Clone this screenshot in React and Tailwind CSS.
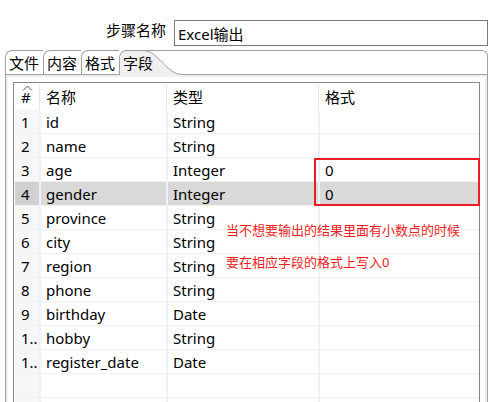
const fields = [
  ["1", "id", "String", ""],
  ["2", "name", "String", ""],
  ["3", "age", "Integer", "0"],
  ["4", "gender", "Integer", "0"],
  ["5", "province", "String", ""],
  ["6", "city", "String", ""],
  ["7", "region", "String", ""],
  ["8", "phone", "String", ""],
  ["9", "birthday", "Date", ""],
  ["1..", "hobby", "String", ""],
  ["1..", "register_date", "Date", ""],
  ["", "", "", ""],
  ["", "", "", ""],
];

function Tabs() {
  return (
    <div role="tablist" className="flex h-[25px]">
      {["文件", "内容", "格式"].map((name) => (
        <button
          key={name}
          type="button"
          role="tab"
          aria-selected="false"
          className="w-[38px] rounded-tl-[7px] border-t border-b border-l border-[#a0a0a0] pl-[3px] text-left leading-[25px] whitespace-nowrap"
        >
          {name}
        </button>
      ))}
      <button
        type="button"
        role="tab"
        aria-selected="true"
        className="relative w-[64px] pl-1 text-left leading-[27px] whitespace-nowrap"
      >
        <svg className="absolute inset-0" width="64" height="25" viewBox="0 0 64 25" fill="none" aria-hidden="true">
          <path d="M.5 25V6.5Q1.500 1.500 6 .5H24C40 .5 46 24.500 64 24.500V25Z" fill="#f0f0f0" />
          <path d="M.5 25V6.500Q1.500 1.500 6 .5H24C40 .5 46 24.500 64 24.500" stroke="#a0a0a0" />
          <path d="M6 .5H64" stroke="#a0a0a0" />
        </svg>
        <span className="relative">字段</span>
      </button>
      <div className="flex-1 rounded-tr-[6px] border-t border-r border-b border-[#a0a0a0]" />
    </div>
  );
}

function FieldTable() {
  return (
    <table className="w-full table-fixed border-separate border-spacing-0 text-left">
      <colgroup>
        <col className="w-[26px]" />
        <col className="w-[127px]" />
        <col className="w-[152px]" />
        <col />
      </colgroup>
      <thead>
        <tr className="h-[26px]">
          <th className="p-0 font-normal">
            <div className="relative mr-px h-[26px] border-r border-[#e5e5e5] pl-[6px] leading-[26px]">
              <svg className="absolute top-px left-[7px]" width="11" height="6" viewBox="0 0 11 6" fill="none" aria-hidden="true">
                <path d="M1 5.500L5.500 1L10 5.500" stroke="#555" />
              </svg>
              #
            </div>
          </th>
          {["名称", "类型"].map((name) => (
            <th key={name} className="p-0 font-normal">
              <div className="mr-px h-[26px] border-r border-[#e5e5e5] pl-[5px] leading-[26px]">{name}</div>
            </th>
          ))}
          <th className="p-0 font-normal">
            <div className="h-[26px] pl-[5px] leading-[26px]">格式</div>
          </th>
        </tr>
      </thead>
      <tbody>
        {fields.map(([num, name, type, format], i) => {
          const selected = i === 3;
          const cell = "h-6 border-b border-b-[#f0f0f0] p-0 pt-0.5 pl-[5px] leading-[21px] whitespace-nowrap";
          return (
            <tr key={i} aria-selected={selected} className={selected ? "bg-[#d9d9d9]" : ""}>
              <td
                className={
                  "h-6 border-r-2 border-b border-r-[#eef1f8] border-b-[#f0f0f0] p-0 pt-0.5 pl-[6px] leading-[21px] whitespace-nowrap " +
                  (selected ? "bg-[#d0d0d0]" : "bg-[#f7f7f7]")
                }
              >
                {num}
              </td>
              <td className={cell + " border-r-2 border-r-[#eef1f8]"}>{name}</td>
              <td className={cell + " border-r-2 border-r-[#eef1f8]"}>{type}</td>
              <td className={cell}>{format}</td>
            </tr>
          );
        })}
      </tbody>
    </table>
  );
}

export default function App() {
  return (
    <main className="flex h-screen flex-col overflow-hidden bg-white pt-5 pr-[3px] pl-[5px] font-['Noto_Sans','Noto_Sans_CJK_SC',sans-serif] text-[15px] text-black">
      <div className="mb-1 flex shrink-0 gap-2">
        <label htmlFor="step-name" className="w-[161px] text-right leading-[21px]">
          步骤名称
        </label>
        <input
          id="step-name"
          defaultValue="Excel输出"
          className="h-[26px] min-w-0 flex-1 border border-[#7a7a7a] bg-white pl-[3px] outline-none"
        />
      </div>
      <Tabs />
      <section className="border-x border-[#a0a0a0]">
        <div className="border-2 border-[#f0f0f0] p-[5px]">
          <div className="relative border border-[#828790] px-px pt-px">
            <FieldTable />
            <div className="pointer-events-none absolute top-[75px] -right-px left-[300px] h-12 border-2 border-[#ed1c24]" />
            <p className="absolute top-[131px] left-[212px] text-[13px] leading-8 whitespace-nowrap text-[#ed1c24]">
              当不想要输出的结果里面有小数点的时候
              <br />
              要在相应字段的格式上写入0
            </p>
          </div>
        </div>
      </section>
    </main>
  );
}
